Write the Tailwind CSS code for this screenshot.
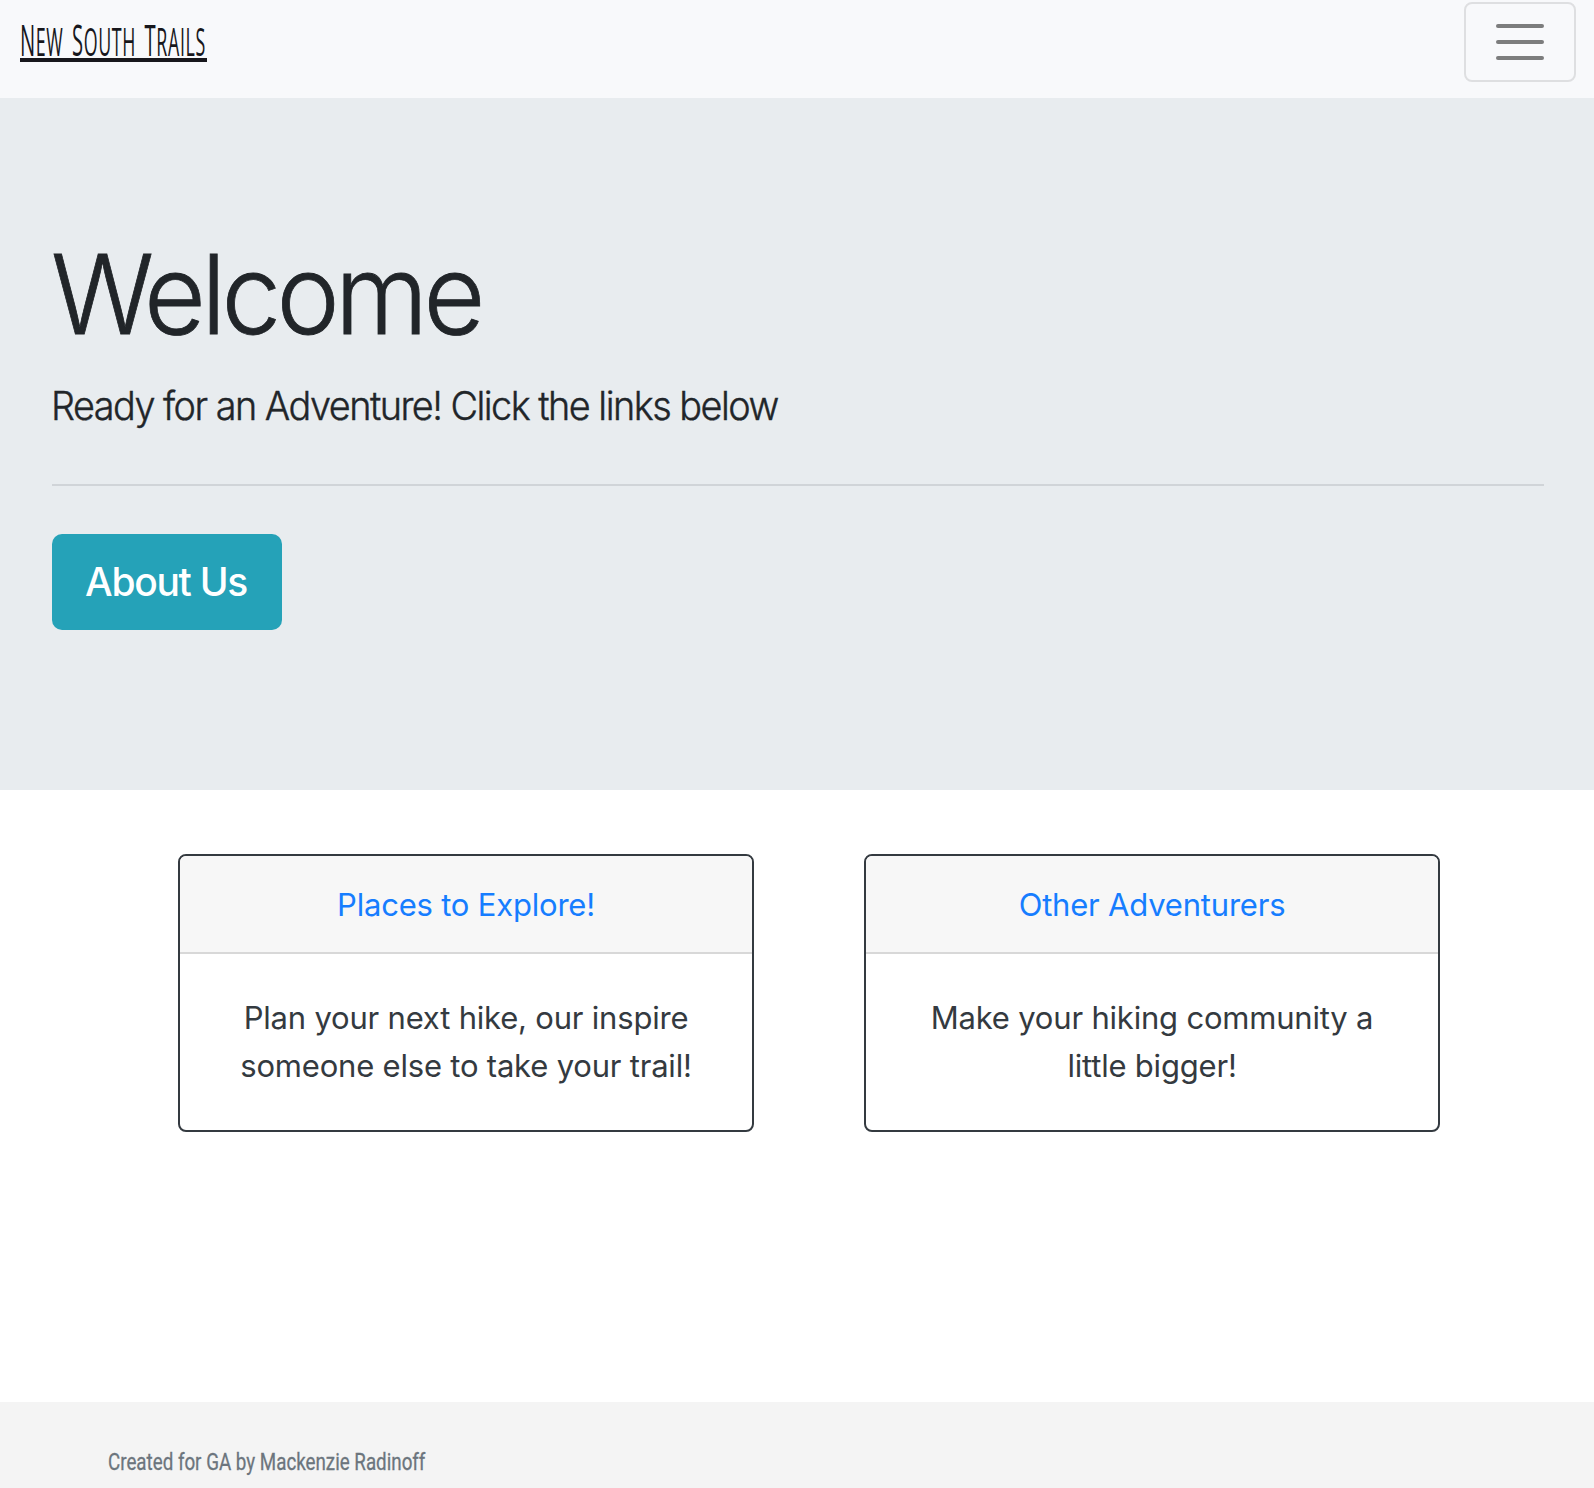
<!DOCTYPE html>
<html lang="en">
<head>
<meta charset="utf-8">
<title>New South Trails</title>
<script src="https://cdn.jsdelivr.net/npm/@tailwindcss/browser@4"></script>
</head>
<body class="min-h-screen flex flex-col bg-white font-['Inter',sans-serif] text-[#212529]">
<nav class="h-[98px] bg-[#f8f9fb] flex items-start justify-between pl-5 pr-[18px] pt-0.5">
  <a class="w-[187px] h-[60px] pt-[11px] border-b-4 border-[#17171c] text-[#17171c] whitespace-nowrap font-['Open_Sans',sans-serif] font-normal uppercase"><span class="inline-block origin-left scale-x-[0.47] text-[38px] leading-[54px] tracking-[1.3px] [word-spacing:7px]"><span class="text-[43px]">N</span>ew <span class="text-[43px]">S</span>outh <span class="text-[43px]">T</span>rails</span></a>
  <button class="w-28 h-20 rounded-lg border-2 border-[#dedfe1] flex flex-col items-center justify-center gap-3">
    <span class="w-12 h-1 rounded-full bg-[#7c7d7d]"></span><span class="w-12 h-1 rounded-full bg-[#7c7d7d]"></span><span class="w-12 h-1 rounded-full bg-[#7c7d7d]"></span>
  </button>
</nav>
<header class="h-[692px] bg-[#e8ecef] pl-[52px] pr-[50px] pt-32">
  <h1 class="text-[110px] leading-[136px] font-light"><span class="inline-block origin-left scale-x-[0.97] tracking-[-4.8px] [-webkit-text-stroke:0.8px_currentColor] -ml-px">Welcome</span></h1>
  <p class="mt-3.5 text-[39px] leading-[60px] font-light whitespace-nowrap"><span class="inline-block origin-left scale-x-[0.97] tracking-[-1.57px] [-webkit-text-stroke:0.4px_currentColor] -ml-px">Ready for an Adventure! Click the links below</span></p>
  <hr class="mt-12 mb-12 border-t-2 border-[#d0d4d8]">
  <a class="flex w-[230px] h-24 items-center justify-center rounded-[10px] bg-[#25a2b8] text-white text-[39px] font-medium tracking-[-1.3px] pr-0.5">About Us</a>
</header>
<main class="flex-1 flex gap-[110px] pl-[178px] pt-16 items-start text-center text-[31px] leading-[48px] tracking-[-0.2px]">
  <section class="w-[576px] h-[278px] rounded-lg border-2 border-[#343a40] overflow-hidden">
    <h2 class="h-[98px] border-b-2 border-[#d8d8d8] bg-[#f7f7f7] pt-[25px] text-[#167dff]">Places to Explore!</h2>
    <p class="pt-10 text-[#343a40]">Plan your next hike, our inspire<br>someone else to take your trail!</p>
  </section>
  <section class="w-[576px] h-[278px] rounded-lg border-2 border-[#343a40] overflow-hidden">
    <h2 class="h-[98px] border-b-2 border-[#d8d8d8] bg-[#f7f7f7] pt-[25px] text-[#167dff]">Other Adventurers</h2>
    <p class="pt-10 text-[#343a40]">Make your hiking community a<br>little bigger!</p>
  </section>
</main>
<footer class="h-[86px] bg-[#f4f4f4] pl-[108px] pt-[44px] text-[#6c757d] font-['Roboto',sans-serif] text-2xl leading-8"><span class="inline-block origin-left scale-x-[0.782] [-webkit-text-stroke:0.3px_currentColor]">Created for GA by Mackenzie Radinoff</span></footer>
</body>
</html>
